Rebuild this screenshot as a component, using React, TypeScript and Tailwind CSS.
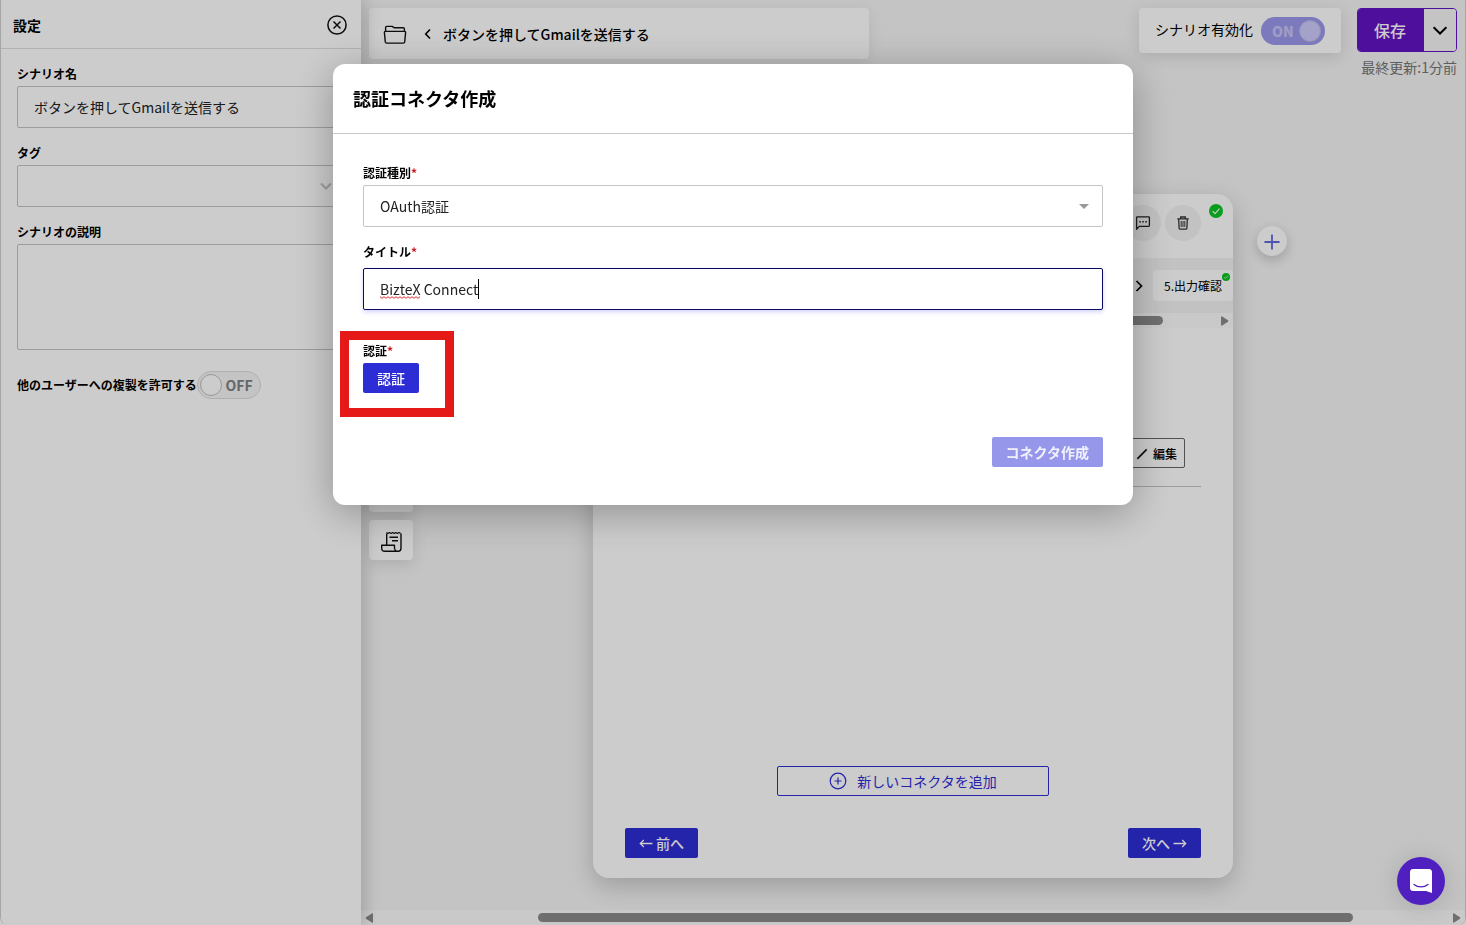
import { useState } from 'react';
import type { ReactNode } from 'react';

const FIELD =
  'block w-full rounded-[2px] border bg-white pl-4 text-[14px] leading-5 text-[#222] outline-none';
const LABEL = 'block text-[12px] leading-[18px] font-bold text-black';

function Required() {
  return <span className="font-bold text-[#c8191e]">*</span>;
}

function CheckBadge({ className }: { className: string }) {
  return (
    <svg viewBox="0 0 14 14" className={className} aria-hidden="true">
      <circle cx="7" cy="7" r="7" fill="#0ac525" />
      <path d="M3.6 7.2 6 9.6l4.5-5" fill="none" stroke="#fff" strokeWidth="1.1" />
    </svg>
  );
}

function FolderIcon() {
  return (
    <svg viewBox="0 0 24 20" className="h-5 w-6" fill="none" stroke="#111" strokeWidth="1.4" strokeLinejoin="round" aria-hidden="true">
      <path d="M2.6 8V3.600c0-.7.5-1.2 1.2-1.2h5.400l2.200 1.400h8.800c.7 0 1.200.5 1.200 1.200V8" />
      <path d="M2.400 7.400h19.200c.7 0 1.100.5 1 1.200l-.9 9.300c-.1.800-.6 1.200-1.300 1.200H3.600c-.7 0-1.200-.4-1.300-1.200l-.9-9.300c-.1-.7.3-1.200 1-1.200z" />
    </svg>
  );
}

function ReceiptIcon() {
  return (
    <svg viewBox="0 0 22 22" className="size-[22px]" fill="none" stroke="#111" strokeWidth="1.4" strokeLinejoin="round" aria-hidden="true">
      <path d="M6.700 14V2.500M21 2.500V17c0 2-1 3.300-2.800 3.300S14.500 19 14.500 17v-2.700H1.700V17c0 2 1.100 3.300 3 3.300h13.500" />
      <path d="M6.500 1.500l1.300 1 1.600-1 1.600 1 1.600-1 1.600 1 1.600-1 1.600 1 1.600-1 1.600 1" strokeWidth="1.100" />
      <path d="M9.500 6.200h8.500M12 9.700h6" />
    </svg>
  );
}

function CommentIcon() {
  return (
    <svg viewBox="0 0 16 16" className="size-4" fill="none" stroke="#222" strokeWidth="1.3" aria-hidden="true">
      <path d="M1.600 14.200V2.600c0-.5.3-.8.8-.8h11.200c.5 0 .8.3.8.8v8c0 .5-.3.800-.8.800H4.200z" strokeLinejoin="round" />
      <path d="M4.300 6.700h1.500M7.300 6.700h1.500M10.300 6.700h1.500" strokeWidth="1.500" />
    </svg>
  );
}

function TrashIcon() {
  return (
    <svg viewBox="0 0 14 16" className="h-4 w-[14px]" fill="none" stroke="#333" strokeWidth="1.3" aria-hidden="true">
      <path d="M1.300 3.900h11.400M4.700 3.700V2h4.600v1.700M2.700 4l.4 9.300c0 .5.3.800.8.800h6.200c.5 0 .8-.3.800-.8L11.300 4" />
      <path d="M5.200 6v6M7 6v6M8.800 6v6" strokeWidth="1" />
    </svg>
  );
}

function Chevron({ d, className }: { d: string; className: string }) {
  return (
    <svg viewBox="0 0 12 12" className={className} fill="none" stroke="currentColor" aria-hidden="true">
      <path d={d} />
    </svg>
  );
}

function Sidebar() {
  const [copyable, setCopyable] = useState(false);
  return (
    <aside className="relative z-10 w-[360px] shrink-0 bg-white shadow-[4px_0_16px_rgba(0,0,0,0.18)]">
      <div className="flex h-[49px] items-center justify-between border-b border-[#dedede] pt-[2px] pr-[14px] pl-3">
        <h2 className="text-[14px] leading-5 font-bold text-black">設定</h2>
        <button type="button" aria-label="閉じる">
          <svg viewBox="0 0 20 20" className="size-5" fill="none" stroke="#111" strokeWidth="1.5">
            <circle cx="10" cy="10" r="9.100" />
            <path d="m6.500 6.500 7 7M13.500 6.500l-7 7" />
          </svg>
        </button>
      </div>
      <div className="flex flex-col gap-4 px-4 pt-4">
        <div className="flex flex-col gap-[3px]">
          <label htmlFor="scenario-name" className={LABEL}>シナリオ名</label>
          <input
            id="scenario-name"
            defaultValue="ボタンを押してGmailを送信する"
            className={`${FIELD} h-[42px] border-[#c4c4c4]`}
          />
        </div>
        <div className="flex flex-col gap-[3px]">
          <label htmlFor="tag" className={LABEL}>タグ</label>
          <div className="relative">
            <select id="tag" className={`${FIELD} h-[42px] appearance-none border-[#c4c4c4]`} />
            <Chevron d="m1 3.500 5 5 5-5" className="pointer-events-none absolute top-[15px] right-[13px] size-3 stroke-2 text-[#c4c4c4]" />
          </div>
        </div>
        <div className="flex flex-col gap-[3px]">
          <label htmlFor="description" className={LABEL}>シナリオの説明</label>
          <textarea id="description" className={`${FIELD} h-[106px] resize-none border-[#c4c4c4]`} />
        </div>
        <label className="mt-[5px] flex items-center">
          <span className="text-[12px] leading-[18px] font-bold text-black">他のユーザーへの複製を許可する</span>
          <input
            type="checkbox"
            role="switch"
            className="sr-only"
            checked={copyable}
            onChange={(e) => setCopyable(e.target.checked)}
          />
          <span className="flex h-7 w-16 items-center justify-between rounded-full border border-[#dcdcdc] bg-[#f5f5f5] pr-[7px] pl-[2px]">
            <span className="size-[22px] rounded-full border border-[#c0c0c0] bg-white" />
            <span className="text-[14px] leading-5 font-bold text-[#808080]">OFF</span>
          </span>
        </label>
      </div>
    </aside>
  );
}

function TopBar() {
  const [active, setActive] = useState(true);
  return (
    <header className="flex items-start justify-between px-2 pt-2">
      <div className="flex h-[51px] w-[500px] items-center rounded-[4px] bg-white pl-[14px] shadow-[0_4px_16px_rgba(0,0,0,0.08)]">
        <FolderIcon />
        <Chevron d="M8 1.500 3.700 6 8 10.500" className="mr-[9px] ml-[15px] size-3 stroke-[1.600] text-black" />
        <span className="text-[14px] leading-5 font-medium text-black">ボタンを押してGmailを送信する</span>
      </div>
      <div className="flex items-start gap-4">
        <label className="flex h-[45px] items-center gap-2 rounded-[4px] bg-white px-4 shadow-[0_4px_16px_rgba(0,0,0,0.12)]">
          <span className="pb-[3px] text-[14px] leading-5 text-black">シナリオ有効化</span>
          <input
            type="checkbox"
            role="switch"
            className="sr-only"
            checked={active}
            onChange={(e) => setActive(e.target.checked)}
          />
          <span className="flex h-7 w-16 items-center justify-between rounded-full bg-[#9b98ec] pr-1 pl-[11px]">
            <span className="text-[14px] leading-5 font-black text-[#c7c5f5]">ON</span>
            <span className="size-[22px] rounded-full border border-[#b9b6e6] bg-[#cecbfb]" />
          </span>
        </label>
        <div className="flex flex-col items-end gap-[5px]">
          <div className="flex h-11 w-[100px] overflow-hidden rounded-[4px] border border-[#6313c5]">
            <button type="button" className="flex-1 bg-[#6313c5] pr-[2px] text-[16px] leading-6 font-medium text-white">
              保存
            </button>
            <button type="button" aria-label="保存メニュー" className="flex w-8 items-center justify-center bg-[#f5f5f5]">
              <Chevron d="m.500 3.500 5.500 5.500 5.500-5.500" className="size-[14px] stroke-[1.700] text-black" />
            </button>
          </div>
          <span className="text-[14px] leading-5 text-[#757575]">最終更新:1分前</span>
        </div>
      </div>
    </header>
  );
}

function RoundButton({ label, children }: { label: string; children: ReactNode }) {
  return (
    <button
      type="button"
      aria-label={label}
      className="flex size-9 items-center justify-center rounded-full bg-[#f3f3f3]"
    >
      {children}
    </button>
  );
}

function ConnectorCard() {
  return (
    <section className="mt-[117px] mb-8 flex w-[640px] shrink-0 flex-col overflow-hidden rounded-[16px] bg-white shadow-[0_8px_24px_rgba(0,0,0,0.2)]">
      <div className="flex h-16 items-start justify-end pr-[10px]">
        <div className="mt-[11px] flex gap-1">
          <RoundButton label="コメント"><CommentIcon /></RoundButton>
          <RoundButton label="削除"><TrashIcon /></RoundButton>
        </div>
        <CheckBadge className="mt-[10px] ml-2 size-[14px]" />
      </div>
      <div className="flex h-[55px] items-center justify-end bg-[#f3f3f3]">
        <Chevron d="m3.500 1 5 5-5 5" className="mr-2 size-3 stroke-[1.700] text-black" />
        <button type="button" className="relative h-[31px] w-20 rounded-[4px] bg-white text-[12px] leading-[18px] text-black">
          5.出力確認
          <CheckBadge className="absolute top-[3px] right-[3px] size-2" />
        </button>
      </div>
      <div className="flex h-[15px] items-center justify-between bg-[#fcfcfc] pr-1">
        <span className="h-[9px] w-[570px] rounded-full bg-[#8b8b8b]" />
        <svg viewBox="0 0 8 10" className="h-[10px] w-2" aria-hidden="true">
          <path d="M1.200.500 7 4.300q.8.700 0 1.400L1.200 9.500Q0 10 0 8.800V1.200Q0 0 1.200.500z" fill="#8b8b8b" />
        </svg>
      </div>
      <div className="mx-8 mt-[110px] flex h-[49px] items-start justify-end border-b border-[#c4c4c4] pr-4">
        <button
          type="button"
          className="flex h-[30px] items-center gap-1 rounded-[2px] border border-[#666] pt-px pr-[7px] pl-3 text-[12px] leading-[18px] font-medium text-black"
        >
          <svg viewBox="0 0 14 14" className="size-[14px]" aria-hidden="true">
            <path d="M2.300 11.800 11.700 2.300" stroke="#111" strokeWidth="1.700" />
          </svg>
          編集
        </button>
      </div>
      <div className="mt-auto flex flex-col gap-8 px-8 pb-5">
        <button
          type="button"
          className="flex h-[30px] w-[272px] items-center justify-center gap-[10px] self-center rounded-[2px] border border-[#2d2dd6] text-[14px] leading-5 text-[#2d2dd6]"
        >
          <svg viewBox="0 0 18 18" className="size-[18px]" fill="none" stroke="currentColor" strokeWidth="1.200" aria-hidden="true">
            <circle cx="9" cy="9" r="7.800" />
            <path d="M9 5.500v7M5.500 9h7" />
          </svg>
          新しいコネクタを追加
        </button>
        <div className="flex justify-between">
          <button type="button" className="flex h-[30px] items-center gap-[3px] rounded-[2px] bg-[#2d2dd6] px-[14px] text-[14px] leading-5 font-medium text-white">
            <svg viewBox="0 0 14 10" className="h-[10px] w-[14px]" fill="none" stroke="currentColor" strokeWidth="1.300" aria-hidden="true">
              <path d="M13.500 5.500h-12M4.800 2 1.300 5.500 4.800 9" />
            </svg>
            前へ
          </button>
          <button type="button" className="flex h-[30px] items-center gap-[3px] rounded-[2px] bg-[#2d2dd6] px-[14px] text-[14px] leading-5 font-medium text-white">
            次へ
            <svg viewBox="0 0 14 10" className="h-[10px] w-[14px]" fill="none" stroke="currentColor" strokeWidth="1.300" aria-hidden="true">
              <path d="M.500 5.500h12M9.200 2l3.500 3.500L9.200 9" />
            </svg>
          </button>
        </div>
      </div>
    </section>
  );
}

function HorizontalScroll() {
  return (
    <div className="flex h-[15px] shrink-0 items-center bg-[#fcfcfc] px-1" aria-hidden="true">
      <svg viewBox="0 0 8 10" className="h-[10px] w-2">
        <path d="M6.800.500 1 4.300q-.800.700 0 1.400l5.800 3.800Q8 10 8 8.800V1.200Q8 0 6.800.500z" fill="#8b8b8b" />
      </svg>
      <span className="flex-[165]" />
      <span className="h-[9px] flex-[815] rounded-full bg-[#8b8b8b]" />
      <span className="flex-[100]" />
      <svg viewBox="0 0 8 10" className="h-[10px] w-2">
        <path d="M1.200.500 7 4.300q.8.700 0 1.400L1.200 9.500Q0 10 0 8.800V1.200Q0 0 1.200.500z" fill="#8b8b8b" />
      </svg>
    </div>
  );
}

function Canvas() {
  return (
    <main className="flex min-w-0 flex-1 flex-col bg-[#f5f5f5]">
      <TopBar />
      <div className="flex min-h-0 flex-1 overflow-hidden pl-2">
        <nav className="mt-[395px] mr-[180px] flex flex-col gap-2">
          <button type="button" aria-label="履歴" className="h-10 w-11 rounded-[4px] bg-white shadow-[0_4px_16px_rgba(0,0,0,0.12)]" />
          <button
            type="button"
            aria-label="ログ"
            className="flex h-10 w-11 items-center justify-center rounded-[4px] bg-white pt-1 shadow-[0_4px_16px_rgba(0,0,0,0.12)]"
          >
            <ReceiptIcon />
          </button>
        </nav>
        <ConnectorCard />
        <button
          type="button"
          aria-label="追加"
          className="mt-[149px] ml-6 flex size-[30px] shrink-0 items-center justify-center rounded-full bg-white pt-px shadow-[0_4px_12px_rgba(0,0,0,0.2)]"
        >
          <svg viewBox="0 0 16 16" className="size-4" stroke="#6464dc" strokeWidth="1.800">
            <path d="M8 .500v15M.500 8h15" />
          </svg>
        </button>
      </div>
      <HorizontalScroll />
    </main>
  );
}

function AuthDialog() {
  const [title, setTitle] = useState('BizteX Connect');
  return (
    <div
      role="dialog"
      aria-modal="true"
      aria-labelledby="dialog-title"
      className="relative w-[800px] rounded-[12px] bg-white shadow-[0_8px_40px_rgba(0,0,0,0.3)]"
    >
      <div className="flex h-[70px] items-center border-b border-[#c8c8c8] px-5 pb-px">
        <h1 id="dialog-title" className="text-[18px] leading-7 font-bold text-black">認証コネクタ作成</h1>
      </div>
      <form className="flex flex-col px-[30px] pt-[30px] pb-[38px]" onSubmit={(e) => e.preventDefault()}>
        <label htmlFor="auth-type" className={`${LABEL} mb-[3px]`}>認証種別<Required /></label>
        <div className="relative mb-4">
          <select id="auth-type" className={`${FIELD} h-[42px] appearance-none border-[#c4c4c4]`}>
            <option>OAuth認証</option>
          </select>
          <svg viewBox="0 0 10 5" className="pointer-events-none absolute top-[19px] right-[14px] h-[5px] w-[10px]" aria-hidden="true">
            <path d="M0 0h10L5 5z" fill="#999" />
          </svg>
        </div>
        <label htmlFor="title" className={`${LABEL} mb-[7px]`}>タイトル<Required /></label>
        <div className="relative mb-8">
          <input
            id="title"
            value={title}
            spellCheck={false}
            onChange={(e) => setTitle(e.target.value)}
            className={`${FIELD} h-[42px] border-[#0a0a64] shadow-[0_2px_4px_rgba(80,80,230,0.25)]`}
          />
          {/* spelling mark and text cursor */}
          <svg viewBox="0 0 41 3" className="pointer-events-none absolute top-[28px] left-[17px] h-[3px] w-[41px]" fill="none" stroke="#e03030" aria-hidden="true">
            <path d="M0 .700 2 2.300 4 .700 6 2.300 8 .700 10 2.300 12 .700 14 2.300 16 .700 18 2.300 20 .700 22 2.300 24 .700 26 2.300 28 .700 30 2.300 32 .700 34 2.300 36 .700 38 2.300 40 .700" />
          </svg>
          <span className="pointer-events-none absolute top-[11px] left-[115px] h-5 w-px bg-black" />
        </div>
        <span id="auth-label" className={`${LABEL} mb-[3px]`}>認証<Required /></span>
        <button
          type="button"
          className="h-[30px] self-start rounded-[2px] bg-[#2d2dd6] px-[14px] text-[14px] leading-5 font-medium text-white"
        >
          認証
        </button>
        <button
          type="submit"
          disabled
          className="mt-11 h-[30px] self-end rounded-[2px] bg-[#9696ea] px-[14px] text-[14px] leading-5 font-bold text-[#f1f1fd]"
        >
          コネクタ作成
        </button>
      </form>
      <div className="pointer-events-none absolute top-[267px] left-[7px] h-[86px] w-[114px] border-[9px] border-[#e61919]" />
    </div>
  );
}

export default function App() {
  return (
    <div className="relative h-screen min-h-[680px] overflow-hidden bg-white font-['Noto_Sans_CJK_JP',sans-serif]">
      <div className="flex h-full overflow-hidden rounded-b-[8px] border-x border-[#d0d0d0]">
        <Sidebar />
        <Canvas />
      </div>
      <div className="fixed inset-0 z-20 flex items-start justify-center bg-black/20 pt-16">
        <AuthDialog />
      </div>
      <button
        type="button"
        aria-label="チャットを開く"
        className="fixed right-[21px] bottom-5 z-30 flex size-12 items-center justify-center rounded-full bg-[#4f1fc0] shadow-[0_2px_24px_rgba(0,0,0,0.15)]"
      >
        <svg viewBox="0 0 22 24" className="h-6 w-[22px]" aria-hidden="true">
          <path d="M3 0h16c1.700 0 3 1.300 3 3v21c-2-.7-4-1.500-6-2H3c-1.700 0-3-1.300-3-3V3c0-1.700 1.300-3 3-3z" fill="#fff" />
          <path d="M4 15.500c4 3.200 10 3.200 14 0" fill="none" stroke="#4f1fc0" strokeWidth="1.300" strokeLinecap="round" />
        </svg>
      </button>
    </div>
  );
}
